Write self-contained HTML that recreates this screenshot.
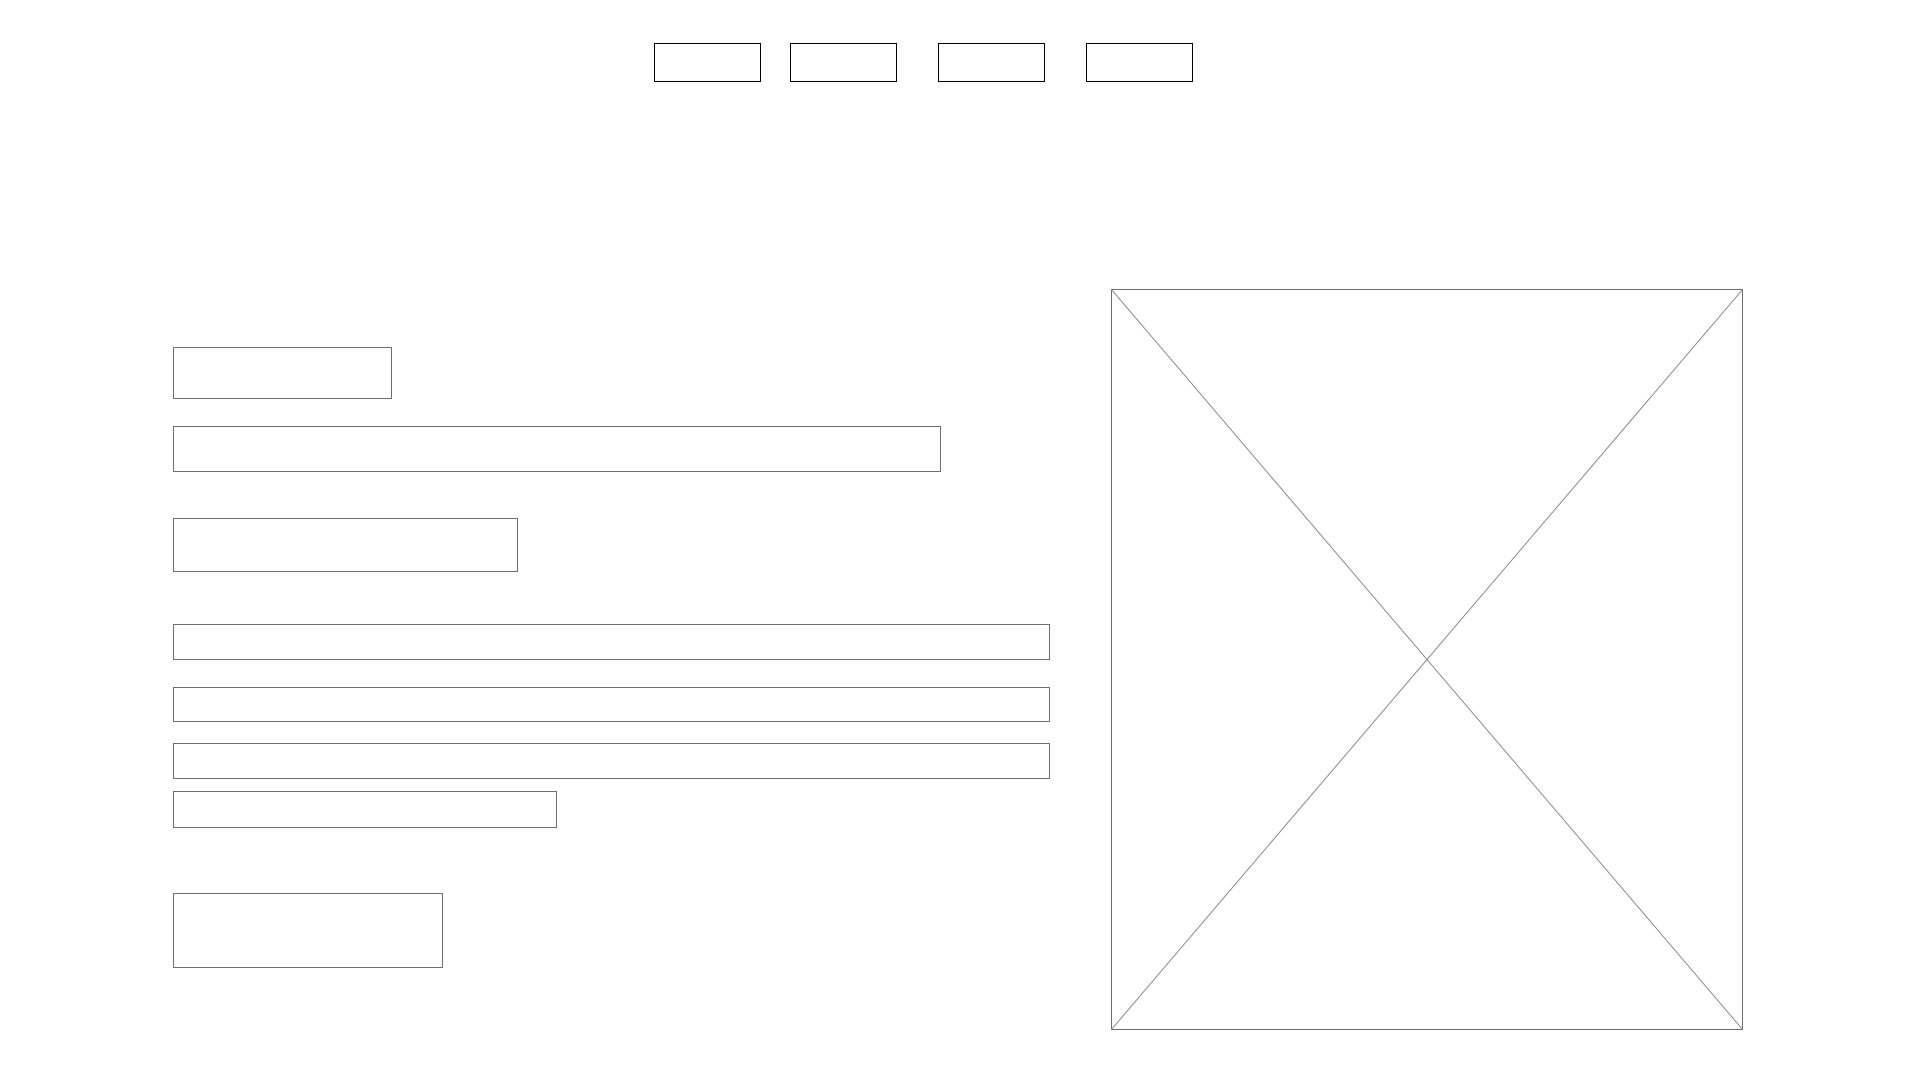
<!DOCTYPE html>
<html><head><style>
html,body{margin:0;padding:0;background:#fff;width:1920px;height:1080px;overflow:hidden;position:relative}
.b{position:absolute;box-sizing:border-box;border:1px solid #6e6e6e}
.n{position:absolute;box-sizing:border-box;border:1px solid #000;top:43px;height:39px;width:107px}
</style></head><body>
<div class="n" style="left:654px"></div>
<div class="n" style="left:790px"></div>
<div class="n" style="left:938px"></div>
<div class="n" style="left:1086px"></div>

<div class="b" style="left:173px;top:347px;width:219px;height:52px"></div>
<div class="b" style="left:173px;top:426px;width:768px;height:46px"></div>
<div class="b" style="left:173px;top:518px;width:345px;height:54px"></div>
<div class="b" style="left:173px;top:624px;width:877px;height:36px"></div>
<div class="b" style="left:173px;top:687px;width:877px;height:35px"></div>
<div class="b" style="left:173px;top:743px;width:877px;height:36px"></div>
<div class="b" style="left:173px;top:791px;width:384px;height:37px"></div>
<div class="b" style="left:173px;top:893px;width:270px;height:75px"></div>

<svg style="position:absolute;left:1111px;top:289px" width="632" height="741" viewBox="0 0 632 741">
<rect x="0.5" y="0.5" width="631" height="740" fill="none" stroke="#6e6e6e" stroke-width="1"/>
<line x1="0" y1="0" x2="632" y2="741" stroke="#8a8a8a" stroke-width="1"/>
<line x1="632" y1="0" x2="0" y2="741" stroke="#8a8a8a" stroke-width="1"/>
</svg>
</body></html>
